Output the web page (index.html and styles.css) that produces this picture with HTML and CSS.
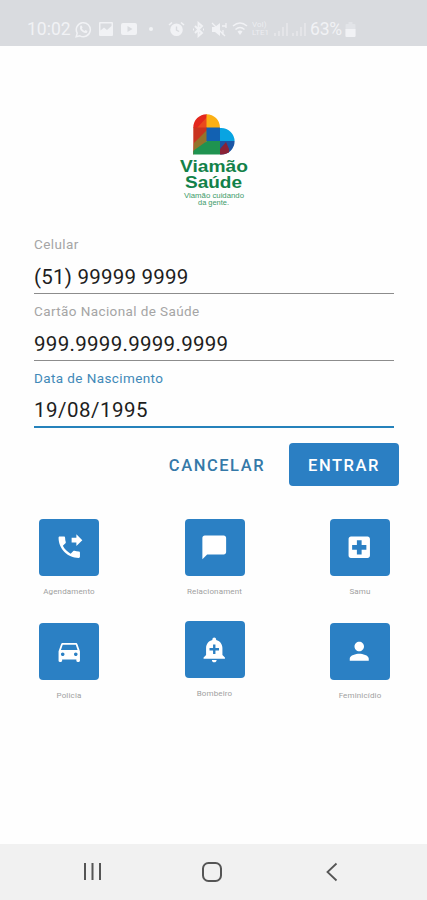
FILE: index.html
```html
<!DOCTYPE html>
<html lang="pt-BR">
<head>
<meta charset="utf-8">
<meta name="viewport" content="width=device-width, initial-scale=1">
<title>Viamão Saúde</title>
<link rel="stylesheet" href="styles.css">
</head>
<body>
<div class="screen">
  <header class="status">
    <span class="time">10:02</span>
    <svg class="s-whats" width="17" height="17" viewBox="0 0 17 17"><path d="M1.2 15.8l1-3.7a7 7 0 1 1 2.7 2.7z" fill="none" stroke="currentColor" stroke-width="1.5"/><path d="M5.2 4.8l1.4-.4 1 2-.8 1q1 1.900 2.700 2.600l1-1 2 1-.4 1.500q-1.500 1.300-4.300-.5T5 7.200z" fill="currentColor"/></svg>
    <svg class="s-image" width="16" height="16" viewBox="0 0 16 16"><path fill="currentColor" fill-rule="evenodd" d="M2 1h12q1 0 1 1v12q0 1-1 1H2q-1 0-1-1V2q0-1 1-1zm.5 1.500v7L6 6.500l3 2.500 4.500-4v-2.500z"/></svg>
    <svg class="s-video" width="18" height="14" viewBox="0 0 18 14"><path fill="currentColor" fill-rule="evenodd" d="M3 1h12q2 0 2 2v8q0 2-2 2H3q-2 0-2-2V3q0-2 2-2zm4.500 3v6l5-3z"/></svg>
    <span class="dot"></span>
    <svg class="s-alarm" width="17" height="17" viewBox="0 0 17 17"><path d="M1 4l3-2.500M16 4l-3-2.500" stroke="currentColor" stroke-width="1.600"/><path fill="currentColor" fill-rule="evenodd" d="M8.500 2.500a6.300 6.300 0 1 1 0 12.600 6.300 6.300 0 0 1 0-12.600zm-.7 3v4l3 1.500.6-1-2.200-1.200V5.500z"/></svg>
    <svg class="s-bt" width="13" height="17" viewBox="0 0 13 17"><path d="M3 5l7 7-3.500 3V2L10 5l-7 7M1 8.500h1M11 8.500h1" fill="none" stroke="currentColor" stroke-width="1.900"/></svg>
    <svg class="s-mute" width="17" height="17" viewBox="0 0 17 17"><path fill="currentColor" d="M1 6h3l5-4v13l-5-4H1z"/><path d="M1 2l13 13M11 5h4M15 2v5M12 9v5" stroke="currentColor" stroke-width="1.300"/></svg>
    <svg class="s-wifi" width="16" height="16" viewBox="0 0 16 16"><path d="M1 5q7-6 14 0M3.500 8.500q4.500-4 9 0" fill="none" stroke="currentColor" stroke-width="1.500"/><path d="M5.500 10.500q2.500-2 5 0L8 14z" fill="currentColor"/></svg>
    <span class="volte"><span>VoI)</span><span>LTE1</span></span>
    <svg class="s-signal" width="34" height="15" viewBox="0 0 34 15"><path d="M1 14v-3M5 14V9M9 14V5M13 14V1M19 14v-3M23 14V9M27 14V5M31 14V1" stroke="currentColor" stroke-width="1.300" opacity=".7"/></svg>
    <span class="charge">63%</span>
    <svg class="s-battery" width="11" height="15" viewBox="0 0 11 15"><path d="M3.500 0h4v2h2q1 0 1 1v11q0 1-1 1h-8q-1 0-1-1V3q0-1 1-1h2z" fill="currentColor" opacity=".4"/><path d="M.5 7h10v7q0 1-1 1h-8q-1 0-1-1z" fill="currentColor"/></svg>
  </header>

  <main class="content">
    <svg class="logo" width="76" height="98" viewBox="0 0 76 98" role="img" aria-label="Viamão Saúde">
      <defs><clipPath id="heart"><path d="M17.300 44.500V17.500a13.300 13.300 0 0 1 26.600 0v.5h1.400a13.300 13.300 0 0 1 13.300 13.300a13.200 13.200 0 0 1-13.300 13.200z"/></clipPath></defs>
      <g clip-path="url(#heart)">
        <path fill="#e3271d" d="M17 3h14v15H17z"/>
        <path fill="#ea4a1c" d="M21 18L31 7v11z"/>
        <path fill="#fbb014" d="M30.500 3H45v15H30.500z"/>
        <path fill="#c9331f" d="M17 17.500h14V31L17 45z"/>
        <path fill="#94732b" d="M18 33l13-13V31L17 45z"/>
        <path fill="#1261b2" d="M30.500 17.500H44V31H30.500z"/>
        <path fill="#08a4e2" d="M44 17h15v14H44z"/>
        <path fill="#1f9350" d="M17 45v-4l14-10h13v14z"/>
        <path fill="#1b56a5" d="M44 31h15v14H44z"/>
        <path fill="#8a2236" d="M44 45v-6l6-7 3 7v6z"/>
      </g>
      <g class="wordmark"><text x="4" y="62" textLength="68" lengthAdjust="spacingAndGlyphs">Viamão</text><text x="9" y="78" textLength="57" lengthAdjust="spacingAndGlyphs">Saúde</text></g>
      <g class="slogan"><text x="8" y="87.500" textLength="60" lengthAdjust="spacingAndGlyphs">Viamão cuidando</text><text x="22" y="94.500" textLength="31" lengthAdjust="spacingAndGlyphs">da gente.</text></g>
    </svg>

    <form class="form">
      <div class="field"><span class="label">Celular</span><span class="value v-cel">(51) 99999 9999</span></div>
      <div class="field"><span class="label">Cartão Nacional de Saúde</span><span class="value v-card">999.9999.9999.9999</span></div>
      <div class="field active"><span class="label">Data de Nascimento</span><span class="value v-date">19/08/1995</span></div>
    </form>

    <div class="actions">
      <button class="btn text" type="button">CANCELAR</button>
      <button class="btn solid" type="button">ENTRAR</button>
    </div>

    <div class="shortcuts">
      <div class="item"><span class="tile"><svg viewBox="0 0 24 24"><path d="M18 11l5-5-5-5v3h-4v4h4v3zm2 4.500c-1.250 0-2.450-.2-3.570-.57-.35-.11-.74-.03-1.020.24l-2.200 2.200c-2.830-1.440-5.150-3.750-6.590-6.590l2.200-2.200c.28-.28.36-.67.250-1.020C8.700 6.450 8.500 5.250 8.500 4c0-.55-.45-1-1-1H4c-.55 0-1 .45-1 1 0 9.390 7.610 17 17 17 .55 0 1-.45 1-1v-3.500c0-.55-.45-1-1-1z"/></svg></span><span class="caption">Agendamento</span></div>
      <div class="item"><span class="tile"><svg viewBox="0 0 24 24"><path d="M20 2H4c-1.100 0-2 .9-2 2v18l4-4h14c1.100 0 2-.9 2-2V4c0-1.100-.9-2-2-2z"/></svg></span><span class="caption">Relacionament</span></div>
      <div class="item"><span class="tile shift"><svg viewBox="0 0 24 24"><path d="M19 3H5c-1.100 0-1.990.9-1.990 2L3 19c0 1.100.9 2 2 2h14c1.100 0 2-.9 2-2V5c0-1.100-.9-2-2-2zm-1 11h-4v4h-4v-4H6v-4h4V6h4v4h4v4z"/></svg></span><span class="caption">Samu</span></div>
      <div class="item"><span class="tile"><svg viewBox="0 0 24 24"><path d="M18.920 6.010C18.720 5.420 18.160 5 17.500 5h-11c-.66 0-1.210.42-1.420 1.010L3 12v8c0 .55.45 1 1 1h1c.55 0 1-.45 1-1v-1h12v1c0 .55.45 1 1 1h1c.55 0 1-.45 1-1v-8l-2.080-5.990zM6.500 16c-.83 0-1.500-.67-1.500-1.500S5.670 13 6.500 13s1.500.67 1.500 1.500S7.330 16 6.500 16zm11 0c-.83 0-1.500-.67-1.500-1.500s.67-1.500 1.500-1.500 1.500.67 1.500 1.500-.67 1.500-1.500 1.500zM5 11l1.500-4.500h11L19 11H5z"/></svg></span><span class="caption">Policia</span></div>
      <div class="item raised"><span class="tile"><svg viewBox="0 0 24 24"><path d="M10.010 21.010c0 1.100.89 1.990 1.990 1.990s1.990-.89 1.990-1.990h-3.980zm8.870-4.190V11c0-3.250-2.250-5.970-5.290-6.690v-.72C13.590 2.710 12.880 2 12 2s-1.590.71-1.590 1.590v.72C7.370 5.030 5.120 7.750 5.120 11v5.820L3 18.940V20h18v-1.060l-2.120-2.120zM16 13.010h-3v3h-2v-3H8V11h3V8h2v3h3v2.010z"/></svg></span><span class="caption">Bombeiro</span></div>
      <div class="item"><span class="tile shift"><svg viewBox="0 0 24 24"><path d="M12 12c2.210 0 4-1.790 4-4s-1.790-4-4-4-4 1.790-4 4 1.790 4 4 4zm0 2c-2.670 0-8 1.340-8 4v2h16v-2c0-2.660-5.330-4-8-4z"/></svg></span><span class="caption">Feminicídio</span></div>
    </div>
  </main>

  <nav class="navbar">
    <svg width="20" height="20" viewBox="0 0 20 20"><path d="M2 1v17M9.500 1v17M17 1v17" stroke-width="2"/></svg>
    <svg width="20" height="20" viewBox="0 0 20 20"><rect x="1" y="1" width="18" height="18" rx="5.500" stroke-width="2"/></svg>
    <svg width="20" height="20" viewBox="0 0 20 20"><path d="M15.500 1.500L6.500 10l9 8.500" stroke-width="1.800"/></svg>
  </nav>
</div>
</body>
</html>
```
FILE: styles.css
```css
* { box-sizing: border-box; }
body { margin: 0; background: #fff; font-family: Roboto, "Liberation Sans", sans-serif; }
.screen { width: 427px; height: 900px; display: flex; flex-direction: column; overflow: hidden; background: #fefefe; }

.status { height: 46px; flex: none; display: flex; align-items: center; padding: 12px 0 0 27px; background: #d9dbdf; color: #f1f2f5; }
.status svg { flex: none; display: block; }
.time { width: 48px; font-size: 17.500px; line-height: 20px; }
.s-image { margin-left: 6px; }
.s-video { margin-left: 6px; }
.dot { width: 4px; height: 4px; border-radius: 50%; background: currentColor; margin: 0 15px 0 11px; }
.s-bt { margin-left: 7px; }
.s-mute { margin-left: 6px; }
.s-wifi { margin-left: 4px; }
.volte { display: flex; flex-direction: column; margin-left: 4px; width: 20px; font-size: 8px; line-height: 8px; opacity: .8; }
.s-signal { margin-left: 2px; }
.charge { width: 34px; margin-left: 2px; font-size: 17.500px; line-height: 20px; white-space: nowrap; letter-spacing: -.2px; }
.s-battery { margin-left: 1px; }

.content { flex: 1; display: flex; flex-direction: column; }
.logo { display: block; margin: 64px 0 0 175.500px; flex: none; }
.wordmark { font: bold 17px "Liberation Sans", sans-serif; fill: #128149; }
.wordmark text + text { font-size: 16px; }
.slogan { font: 7px "Liberation Sans", sans-serif; fill: #3c9a69; }
.slogan text + text { font-size: 6.500px; }

.form { margin: 25px 33px 0 34px; }
.field { height: 67px; display: flex; flex-direction: column; }
.label { height: 22px; padding-top: 3px; font-size: 13.500px; line-height: 16px; letter-spacing: .4px; color: #a5a5a5; white-space: nowrap; }
.value { height: 39px; border-bottom: 1px solid #8c8c8c; font-size: 20.500px; line-height: 44px; color: #1d1d1d; white-space: nowrap; }
.active .label { color: #4189b8; }
.active .value { border-bottom: 2px solid #2582bb; line-height: 42px; }
.v-cel { letter-spacing: .23px; }
.v-card { letter-spacing: .3px; }
.v-date { letter-spacing: .5px; }

.actions { display: flex; justify-content: flex-end; padding-right: 28px; margin-top: 9px; }
.btn { height: 43px; border: 0; padding: 2px 0 0; font: 500 16.500px/41px Roboto, sans-serif; letter-spacing: 1.550px; }
.btn.text { width: 120px; margin-right: 12px; background: none; color: #3579a8; }
.btn.solid { width: 110px; border-radius: 4px; background: #2b7fc3; color: #fff; }

.shortcuts { display: grid; grid-template-columns: repeat(3, 60px); justify-content: space-between; grid-auto-rows: 104px; margin-top: 33px; padding: 0 37px 0 39px; }
.item { display: flex; flex-direction: column; align-items: center; }
.raised { margin-top: -2px; }
.tile { width: 60px; height: 57px; border-radius: 4px; background: #2b80c4; display: flex; align-items: center; justify-content: center; flex: none; }
.tile svg { width: 28.500px; height: 28.500px; fill: #fff; }
.tile.shift svg { margin-right: 2px; }
.caption { margin-top: 10px; font-size: 8px; line-height: 11px; letter-spacing: .15px; color: #a0a0a0; white-space: nowrap; }

.navbar { height: 56px; flex: none; background: #f1f1f1; display: flex; justify-content: space-between; align-items: center; padding: 0 86px 0 82px; }
.navbar svg { fill: none; stroke: #555; display: block; }
.navbar svg:first-child { margin-left: 1px; }
```
